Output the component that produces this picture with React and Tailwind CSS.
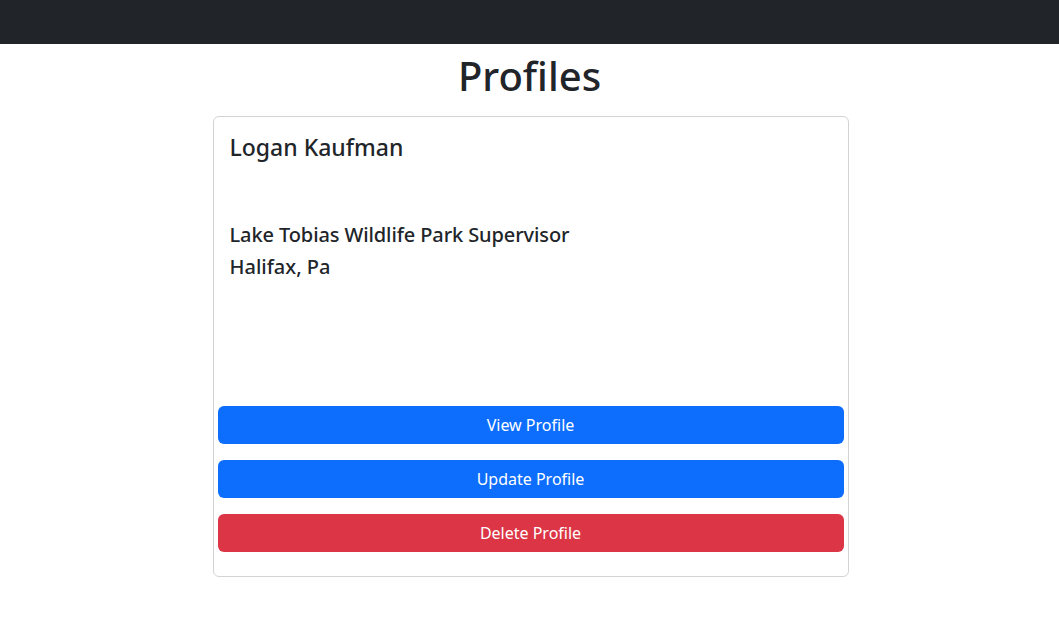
export default function App() {
  const font = { fontFamily: '"Noto Sans", "Open Sans", sans-serif' };
  return (
    <div className="min-h-[626px] bg-white text-[#212529]" style={font}>
      <div className="h-[44px] bg-[#212529]" />
      <h1 className="mt-[8px] mb-[16px] text-center text-[40px] leading-[48px] font-medium">Profiles</h1>
      <div className="pl-[2px]">
        <div className="mx-auto flex h-[461px] w-[636px] flex-col rounded-[6px] border border-[#d3d3d3]">
          <div className="px-[16px] pt-[16px]">
            <h4 className="text-[23px] leading-[29px] font-medium">Logan Kaufman</h4>
            <div className="mt-[61px] flex flex-col gap-[8px]">
              <h5 className="text-[20px] leading-[24px] font-medium tracking-[-0.1px]">Lake Tobias Wildlife Park Supervisor</h5>
              <h5 className="text-[20px] leading-[24px] font-medium">Halifax, Pa</h5>
            </div>
          </div>
          <div className="mt-auto mb-[24px] flex flex-col gap-[16px] px-[4px]">
            <button className="h-[38px] w-full rounded-[6px] bg-[#0d6efd] text-[16px] text-white">View Profile</button>
            <button className="h-[38px] w-full rounded-[6px] bg-[#0d6efd] text-[16px] text-white">Update Profile</button>
            <button className="h-[38px] w-full rounded-[6px] bg-[#dc3545] text-[16px] text-white">Delete Profile</button>
          </div>
        </div>
      </div>
    </div>
  );
}
